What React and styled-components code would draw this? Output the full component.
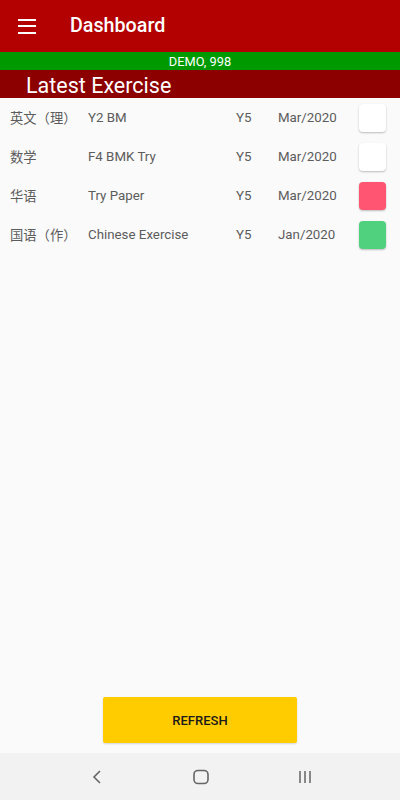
import React from "react"
import styled, { createGlobalStyle } from "styled-components"

const Global = createGlobalStyle`
  html, body { margin:0; padding:0; }
  body { font-family: Roboto, "Noto Sans CJK SC", sans-serif; background:#fafafa; }
`

const Screen = styled.div`
  width:400px;
  height:800px;
  display:flex;
  flex-direction:column;
  background:#fafafa;
  overflow:hidden;
`
const AppBar = styled.div`
  height:52px;
  background:#b30000;
  display:flex;
  align-items:center;
  padding-left:18px;
  box-sizing:border-box;
`
const Burger = styled.div`
  width:18px;
  display:flex;
  flex-direction:column;
  gap:4.5px;
  span{
    display:block;
    height:2px;
    background:#fff;
  }
`
const Title = styled.h1`
  margin:0 0 0 34px;
  color:#fff;
  font-size:19.7px;
  font-weight:500;
  line-height:1;
`
const DemoBar = styled.div`
  height:18px;
  background:#009a00;
  color:#fff;
  font-size:12.8px;
  display:flex;
  align-items:center;
  justify-content:center;
`
const Section = styled.div`
  height:28px;
  background:#8c0000;
  color:#fff;
  font-size:21.5px;
  display:flex;
  align-items:center;
  padding:2px 0 0 26px;
  box-sizing:border-box;
`
const List = styled.div`
  display:flex;
  flex-direction:column;
  flex:1;
`
const Row = styled.div`
  height:39px;
  display:grid;
  grid-template-columns:78px 148px 42px 81px 27px;
  align-items:center;
  padding-left:10px;
  font-size:13.3px;
  color:#5c5c5c;
`
const Cell = styled.div`
  white-space:nowrap;
`
const Box = styled.div`
  width:27px;
  height:28px;
  border-radius:4px;
  background:${p => p.$color};
  box-shadow:0 1px 2px rgba(0,0,0,0.25);
`
const Footer = styled.div`
  display:flex;
  justify-content:center;
  padding-bottom:10px;
`
const Refresh = styled.button`
  width:194px;
  height:46px;
  background:#ffcc00;
  border:none;
  border-radius:2px;
  font-family:Roboto, sans-serif;
  font-size:13px;
  font-weight:500;
  color:#1a1a1a;
  box-shadow:0 1px 2px rgba(0,0,0,0.15);
`
const NavBar = styled.div`
  height:47px;
  background:#f2f2f2;
  display:flex;
  justify-content:center;
  align-items:center;
  gap:88px;
  padding-left:2px;
`

const rows = [
  { subject: "英文（理）", title: "Y2 BM", level: "Y5", date: "Mar/2020", color: "#ffffff" },
  { subject: "数学", title: "F4 BMK Try", level: "Y5", date: "Mar/2020", color: "#ffffff" },
  { subject: "华语", title: "Try Paper", level: "Y5", date: "Mar/2020", color: "#ff5573" },
  { subject: "国语（作）", title: "Chinese Exercise", level: "Y5", date: "Jan/2020", color: "#4fd17e" },
]

export default function App() {
  return (
    <Screen>
      <Global />
      <AppBar>
        <Burger><span /><span /><span /></Burger>
        <Title>Dashboard</Title>
      </AppBar>
      <DemoBar>DEMO, 998</DemoBar>
      <Section>Latest Exercise</Section>
      <List>
        {rows.map((r, i) => (
          <Row key={i}>
            <Cell>{r.subject}</Cell>
            <Cell>{r.title}</Cell>
            <Cell>{r.level}</Cell>
            <Cell>{r.date}</Cell>
            <Box $color={r.color} />
          </Row>
        ))}
      </List>
      <Footer>
        <Refresh>REFRESH</Refresh>
      </Footer>
      <NavBar>
        <svg width="16" height="16" viewBox="0 0 16 16">
          <path d="M11 2 L5 8 L11 14" fill="none" stroke="#666" strokeWidth="1.6" />
        </svg>
        <svg width="16" height="16" viewBox="0 0 16 16">
          <rect x="1" y="1.5" width="14" height="13" rx="4" fill="none" stroke="#666" strokeWidth="1.6" />
        </svg>
        <svg width="16" height="16" viewBox="0 0 16 16">
          <path d="M3 2 V14 M8 2 V14 M13 2 V14" stroke="#666" strokeWidth="1.5" />
        </svg>
      </NavBar>
    </Screen>
  )
}
